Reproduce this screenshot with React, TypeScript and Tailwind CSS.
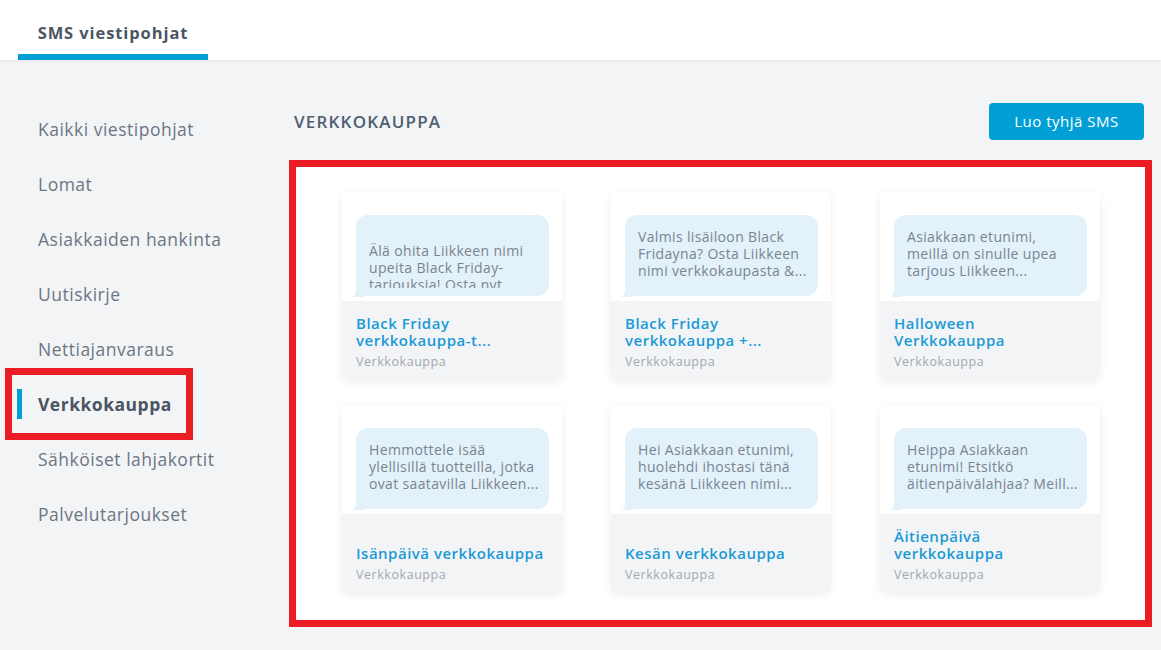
import React from 'react'

type Card = {
  lines: string[]
  title: string[]
  offset?: boolean
}

const cards: Card[] = [
  { lines: ['Älä ohita Liikkeen nimi', 'upeita Black Friday-', 'tarjouksia! Osta nyt...'], title: ['Black Friday', 'verkkokauppa-t...'], offset: true },
  { lines: ['Valmis lisäiloon Black', 'Fridayna? Osta Liikkeen', 'nimi verkkokaupasta &...'], title: ['Black Friday', 'verkkokauppa +...'] },
  { lines: ['Asiakkaan etunimi,', 'meillä on sinulle upea', 'tarjous Liikkeen...'], title: ['Halloween', 'Verkkokauppa'] },
  { lines: ['Hemmottele isää', 'ylellisillä tuotteilla, jotka', 'ovat saatavilla Liikkeen...'], title: ['Isänpäivä verkkokauppa'] },
  { lines: ['Hei Asiakkaan etunimi,', 'huolehdi ihostasi tänä', 'kesänä Liikkeen nimi...'], title: ['Kesän verkkokauppa'] },
  { lines: ['Heippa Asiakkaan', 'etunimi! Etsitkö', 'äitienpäivälahjaa? Meill...'], title: ['Äitienpäivä', 'verkkokauppa'] },
]

const menu = [
  'Kaikki viestipohjat',
  'Lomat',
  'Asiakkaiden hankinta',
  'Uutiskirje',
  'Nettiajanvaraus',
  'Verkkokauppa',
  'Sähköiset lahjakortit',
  'Palvelutarjoukset',
]

const TemplateCard = ({ card }: { card: Card }) => {
  return (
    <div className="w-[220px] h-[188px] rounded-md bg-white shadow-[0_2px_10px_rgba(0,0,0,0.07)] overflow-hidden flex flex-col">
      <div className="h-[109px] pt-[23px] pl-[14px] pr-[13px]">
        <div className="relative h-[81px]">
          <svg className="absolute left-[-4px] bottom-[-1px]" width="12" height="8" viewBox="0 0 12 8">
            <path d="M0 8 C3 7 4 5 4 0 L12 0 L12 8 Z" fill="#e2f1fa" />
          </svg>
          <div className="relative h-full rounded-xl bg-[#e2f1fa] px-[13px] overflow-hidden">
            <div className={card.offset ? 'mt-[27px] h-[46px] overflow-hidden' : 'mt-[13px]'}>
              <p className="text-[14px] leading-[17px] tracking-[0.35px] text-[#7a8490] whitespace-nowrap">
                {card.lines[0]}<br />{card.lines[1]}<br />{card.lines[2]}
              </p>
            </div>
          </div>
        </div>
      </div>
      <div className="flex-1 bg-[#f3f4f6] px-[14px] pb-[10px] flex flex-col justify-end">
        <p className="text-[15px] leading-[17px] font-semibold tracking-[0.5px] text-[#1b9ad6] whitespace-nowrap">
          {card.title[0]}
          {card.title[1] && <><br />{card.title[1]}</>}
        </p>
        <p className="mt-[5px] text-[12.5px] leading-4 tracking-[0.55px] text-[#a1a8b2]">Verkkokauppa</p>
      </div>
    </div>
  )
}

export default function App() {
  return (
    <div className="min-h-[650px] bg-[#f3f4f6] font-['Open_Sans',sans-serif]">
      <div className="h-[60px] bg-white shadow-[0_1px_3px_rgba(0,0,0,0.06)] flex">
        <div className="ml-[18px] w-[190px] flex flex-col justify-end">
          <div className="text-center text-[16.5px] font-bold tracking-[0.9px] text-[#4b5563] pb-[8px]">SMS viestipohjat</div>
          <div className="h-[6px] bg-[#019fd6]"></div>
        </div>
      </div>
      <div className="flex">
        <div className="w-[289px] pt-[42px]">
          {menu.map((m) => {
            const active = m === 'Verkkokauppa'
            return (
              <div key={m} className="relative h-[55px] flex items-center pl-[38px]">
                {active && (
                  <>
                    <span className="absolute left-[17px] top-[12px] w-[5px] h-[30px] bg-[#019fd6]"></span>
                    <span className="absolute left-[5px] top-[-9px] w-[188px] h-[72px] border-[7px] border-[#ec1c24]"></span>
                  </>
                )}
                <span className={active ? 'text-[17.5px] tracking-[0.5px] font-bold text-[#4b5563]' : 'text-[17.5px] tracking-[0.5px] text-[#6b7684]'}>{m}</span>
              </div>
            )
          })}
        </div>
        <div className="w-[863px] pt-[43px]">
          <div className="flex items-center justify-between h-[37px] pl-[5px] pr-[8px]">
            <div className="text-[17px] font-semibold tracking-[1.2px] text-[#4f5e70]">VERKKOKAUPPA</div>
            <button className="h-[37px] w-[155px] rounded bg-[#019fd6] text-white text-[15px] tracking-[0.5px]">Luo tyhjä SMS</button>
          </div>
          <div className="mt-[20px] bg-white border-[7px] border-[#ec1c24] pt-[25px] pb-[27px] pl-[46px]">
            <div className="grid grid-cols-[220px_220px_220px] gap-x-[49px] gap-y-[25px]">
              {cards.map((c) => (
                <TemplateCard key={c.title.join(' ')} card={c} />
              ))}
            </div>
          </div>
        </div>
      </div>
    </div>
  )
}
